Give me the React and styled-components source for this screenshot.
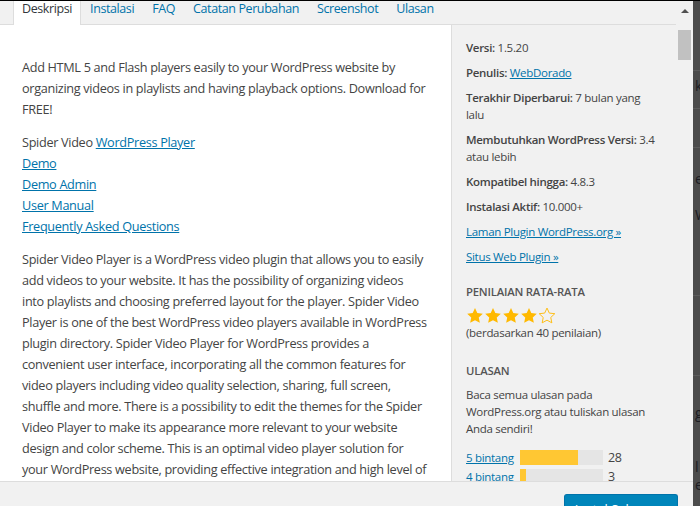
import React from 'react';
import styled, { createGlobalStyle } from 'styled-components';

const GlobalStyle = createGlobalStyle`
  html, body {
    margin: 0;
    padding: 0;
    background: #4c4c4c;
    overflow: hidden;
  }
  body {
    font-family: "Open Sans", "Noto Sans", "Liberation Sans", sans-serif;
    -webkit-font-smoothing: antialiased;
  }
`;

const Page = styled.div`
  display: flex;
  height: 505px;
  border-top: 1px solid #000;
  overflow: hidden;
`;

const Modal = styled.div`
  width: 693px;
  flex-shrink: 0;
  display: flex;
  flex-direction: column;
  background: #fff;
`;

const Scroller = styled.div`
  display: flex;
  height: 480px;
  flex-shrink: 0;
  overflow: hidden;
`;

const Main = styled.div`
  flex: 1;
  display: flex;
  flex-direction: column;
  min-width: 0;
`;

const Tabs = styled.div`
  display: flex;
  height: 23px;
  flex-shrink: 0;
  padding-left: 13px;
  background: #f1f1f1;
  border-bottom: 1px solid #ddd;
`;

const Tab = styled.a`
  display: block;
  height: ${p => (p.$active ? '24px' : '23px')};
  line-height: 16px;
  padding: 0 8px;
  font-size: 12.5px;
  letter-spacing: -0.4px;
  color: ${p => (p.$active ? '#32373c' : '#0073aa')};
  background: ${p => (p.$active ? '#fff' : 'transparent')};
  border-left: 1px solid ${p => (p.$active ? '#ddd' : 'transparent')};
  border-right: 1px solid ${p => (p.$active ? '#ddd' : 'transparent')};
  text-decoration: none;
  white-space: nowrap;
`;

const Body = styled.div`
  flex: 1;
  display: flex;
  min-height: 0;
`;

const Description = styled.div`
  width: 407px;
  flex-shrink: 0;
  padding: 32px 22px 0;
  background: #fff;
  color: #444;
  font-size: 12.7px;
  line-height: 21px;
  letter-spacing: -0.32px;
`;

const Para = styled.p`
  margin: 0 0 12px;
  white-space: nowrap;
`;

const Link = styled.a`
  color: #0073aa;
  text-decoration: underline;
`;

const Sidebar = styled.div`
  flex: 1;
  background: #f1f1f1;
  border-left: 1px solid #ddd;
  padding: 14px 0 0 14px;
  color: #444;
  font-size: 11.5px;
  line-height: 17px;
  letter-spacing: -0.3px;
`;

const Facts = styled.ul`
  list-style: none;
  margin: 0;
  padding: 0;
`;

const Fact = styled.li`
  margin-bottom: 8px;
  white-space: nowrap;
`;

const Label = styled.strong`
  font-weight: 600;
`;

const Heading = styled.h3`
  margin: ${p => p.$top} 0 0;
  font-size: 11.3px;
  line-height: 17px;
  font-weight: 600;
  color: #555;
  text-transform: uppercase;
  letter-spacing: -0.2px;
`;

const Stars = styled.div`
  display: flex;
  height: 17px;
  margin-top: 7px;
`;

const Note = styled.div`
  margin-top: ${p => p.$top || '0'};
  white-space: nowrap;
`;

const Ratings = styled.div`
  margin-top: 11px;
`;

const RatingRow = styled.div`
  display: flex;
  align-items: center;
  height: 19px;
`;

const RatingLink = styled(Link)`
  width: 54px;
  white-space: nowrap;
`;

const Bar = styled.div`
  width: 83px;
  height: 15px;
  background: #e5e5e5;
`;

const BarFill = styled.div`
  height: 100%;
  background: #ffc733;
`;

const Count = styled.span`
  margin-left: 5px;
  font-size: 12.5px;
`;

const Scrollbar = styled.div`
  width: 17px;
  flex-shrink: 0;
  background: #f1f1f1;
  display: flex;
  flex-direction: column;
  align-items: center;
`;

const ArrowUp = styled.div`
  margin-top: 8px;
  width: 0;
  height: 0;
  border-left: 4px solid transparent;
  border-right: 4px solid transparent;
  border-bottom: 4px solid #505050;
`;

const Thumb = styled.div`
  margin-top: 17px;
  width: 13px;
  height: 30px;
  background: #c1c1c1;
`;

const Footer = styled.div`
  flex-shrink: 0;
  display: flex;
  justify-content: flex-end;
  padding: 12px 15px;
  background: #f1f1f1;
  border-top: 1px solid #ddd;
`;

const InstallButton = styled.button`
  width: 114px;
  height: 30px;
  background: #0085ba;
  border: 1px solid #0073aa;
  border-bottom-color: #006799;
  border-radius: 3px;
  color: #fff;
  font-family: inherit;
  font-size: 13px;
`;

const Backdrop = styled.div`
  flex: 1;
  display: flex;
  flex-direction: column;
  overflow: hidden;
  font-size: 14px;
  color: #1c1c22;
  line-height: 18px;
`;

const Band = styled.div`
  height: ${p => p.$h}px;
  flex-shrink: 0;
  border-bottom: ${p => (p.$line ? '1px solid #5c5c5c' : 'none')};
  padding-left: 2px;
  padding-top: ${p => p.$pt || 0}px;
  white-space: nowrap;
  box-sizing: border-box;
`;

const Star = ({ filled }) => (
  <svg width="18" height="17" viewBox="0 0 20 19">
    <path
      d="M10 1.2l2.6 5.6 6.1.7-4.5 4.2 1.2 6L10 14.7l-5.4 3 1.2-6-4.5-4.2 6.1-.7z"
      fill={filled ? '#ffb900' : 'none'}
      stroke="#ffb900"
      strokeWidth={filled ? 0 : 1}
    />
  </svg>
);

const tabs = ['Deskripsi', 'Instalasi', 'FAQ', 'Catatan Perubahan', 'Screenshot', 'Ulasan'];

const longText = [
  'Spider Video Player is a WordPress video plugin that allows you to easily',
  'add videos to your website. It has the possibility of organizing videos',
  'into playlists and choosing preferred layout for the player. Spider Video',
  'Player is one of the best WordPress video players available in WordPress',
  'plugin directory. Spider Video Player for WordPress provides a',
  'convenient user interface, incorporating all the common features for',
  'video players including video quality selection, sharing, full screen,',
  'shuffle and more. There is a possibility to edit the themes for the Spider',
  'Video Player to make its appearance more relevant to your website',
  'design and color scheme. This is an optimal video player solution for',
  'your WordPress website, providing effective integration and high level of',
  'customization.',
];

const ratings = [
  { label: '5 bintang', count: 28 },
  { label: '4 bintang', count: 3 },
  { label: '3 bintang', count: 1 },
];

const App = () => (
  <>
    <GlobalStyle />
    <Page>
      <Modal>
        <Scroller>
          <Main>
            <Tabs>
              {tabs.map((t, i) => (
                <Tab key={t} $active={i === 0}>{t}</Tab>
              ))}
            </Tabs>
            <Body>
              <Description>
                <Para>
                  Add HTML 5 and Flash players easily to your WordPress website by<br />
                  organizing videos in playlists and having playback options. Download for<br />
                  FREE!
                </Para>
                <Para>
                  Spider Video <Link>WordPress Player</Link><br />
                  <Link>Demo</Link><br />
                  <Link>Demo Admin</Link><br />
                  <Link>User Manual</Link><br />
                  <Link>Frequently Asked Questions</Link>
                </Para>
                <Para>
                  {longText.map((l, i) => (
                    <React.Fragment key={i}>{l}{i < longText.length - 1 && <br />}</React.Fragment>
                  ))}
                </Para>
              </Description>
              <Sidebar>
                <Facts>
                  <Fact><Label>Versi:</Label> 1.5.20</Fact>
                  <Fact><Label>Penulis:</Label> <Link>WebDorado</Link></Fact>
                  <Fact><Label>Terakhir Diperbarui:</Label> 7 bulan yang<br />lalu</Fact>
                  <Fact><Label>Membutuhkan WordPress Versi:</Label> 3.4<br />atau lebih</Fact>
                  <Fact><Label>Kompatibel hingga:</Label> 4.8.3</Fact>
                  <Fact><Label>Instalasi Aktif:</Label> 10.000+</Fact>
                  <Fact><Link>Laman Plugin WordPress.org »</Link></Fact>
                  <Fact><Link>Situs Web Plugin »</Link></Fact>
                </Facts>
                <Heading $top="18px">Penilaian Rata-rata</Heading>
                <Stars>
                  {[1, 2, 3, 4, 5].map(n => <Star key={n} filled={n <= 4} />)}
                </Stars>
                <Note>(berdasarkan 40 penilaian)</Note>
                <Heading $top="21px">Ulasan</Heading>
                <Note $top="7px">
                  Baca semua ulasan pada<br />
                  WordPress.org atau tuliskan ulasan<br />
                  Anda sendiri!
                </Note>
                <Ratings>
                  {ratings.map(r => (
                    <RatingRow key={r.label}>
                      <RatingLink>{r.label}</RatingLink>
                      <Bar>
                        <BarFill style={{ width: `${(r.count / 40) * 100}%` }} />
                      </Bar>
                      <Count>{r.count}</Count>
                    </RatingRow>
                  ))}
                </Ratings>
              </Sidebar>
            </Body>
          </Main>
          <Scrollbar>
            <ArrowUp />
            <Thumb />
          </Scrollbar>
        </Scroller>
        <Footer>
          <InstallButton>Instal Sekarang</InstallButton>
        </Footer>
      </Modal>
      <Backdrop>
        <Band $h={70} $line />
        <Band $h={38} $line $pt={6}>k</Band>
        <Band $h={39} $line />
        <Band $h={148} $line $pt={22}>e<br /><br />W</Band>
        <Band $h={80} $line />
        <Band $h={80} $pt={28}>g</Band>
        <Band $h={60} $pt={2}>l b<br />es</Band>
      </Backdrop>
    </Page>
  </>
);

export default App;
